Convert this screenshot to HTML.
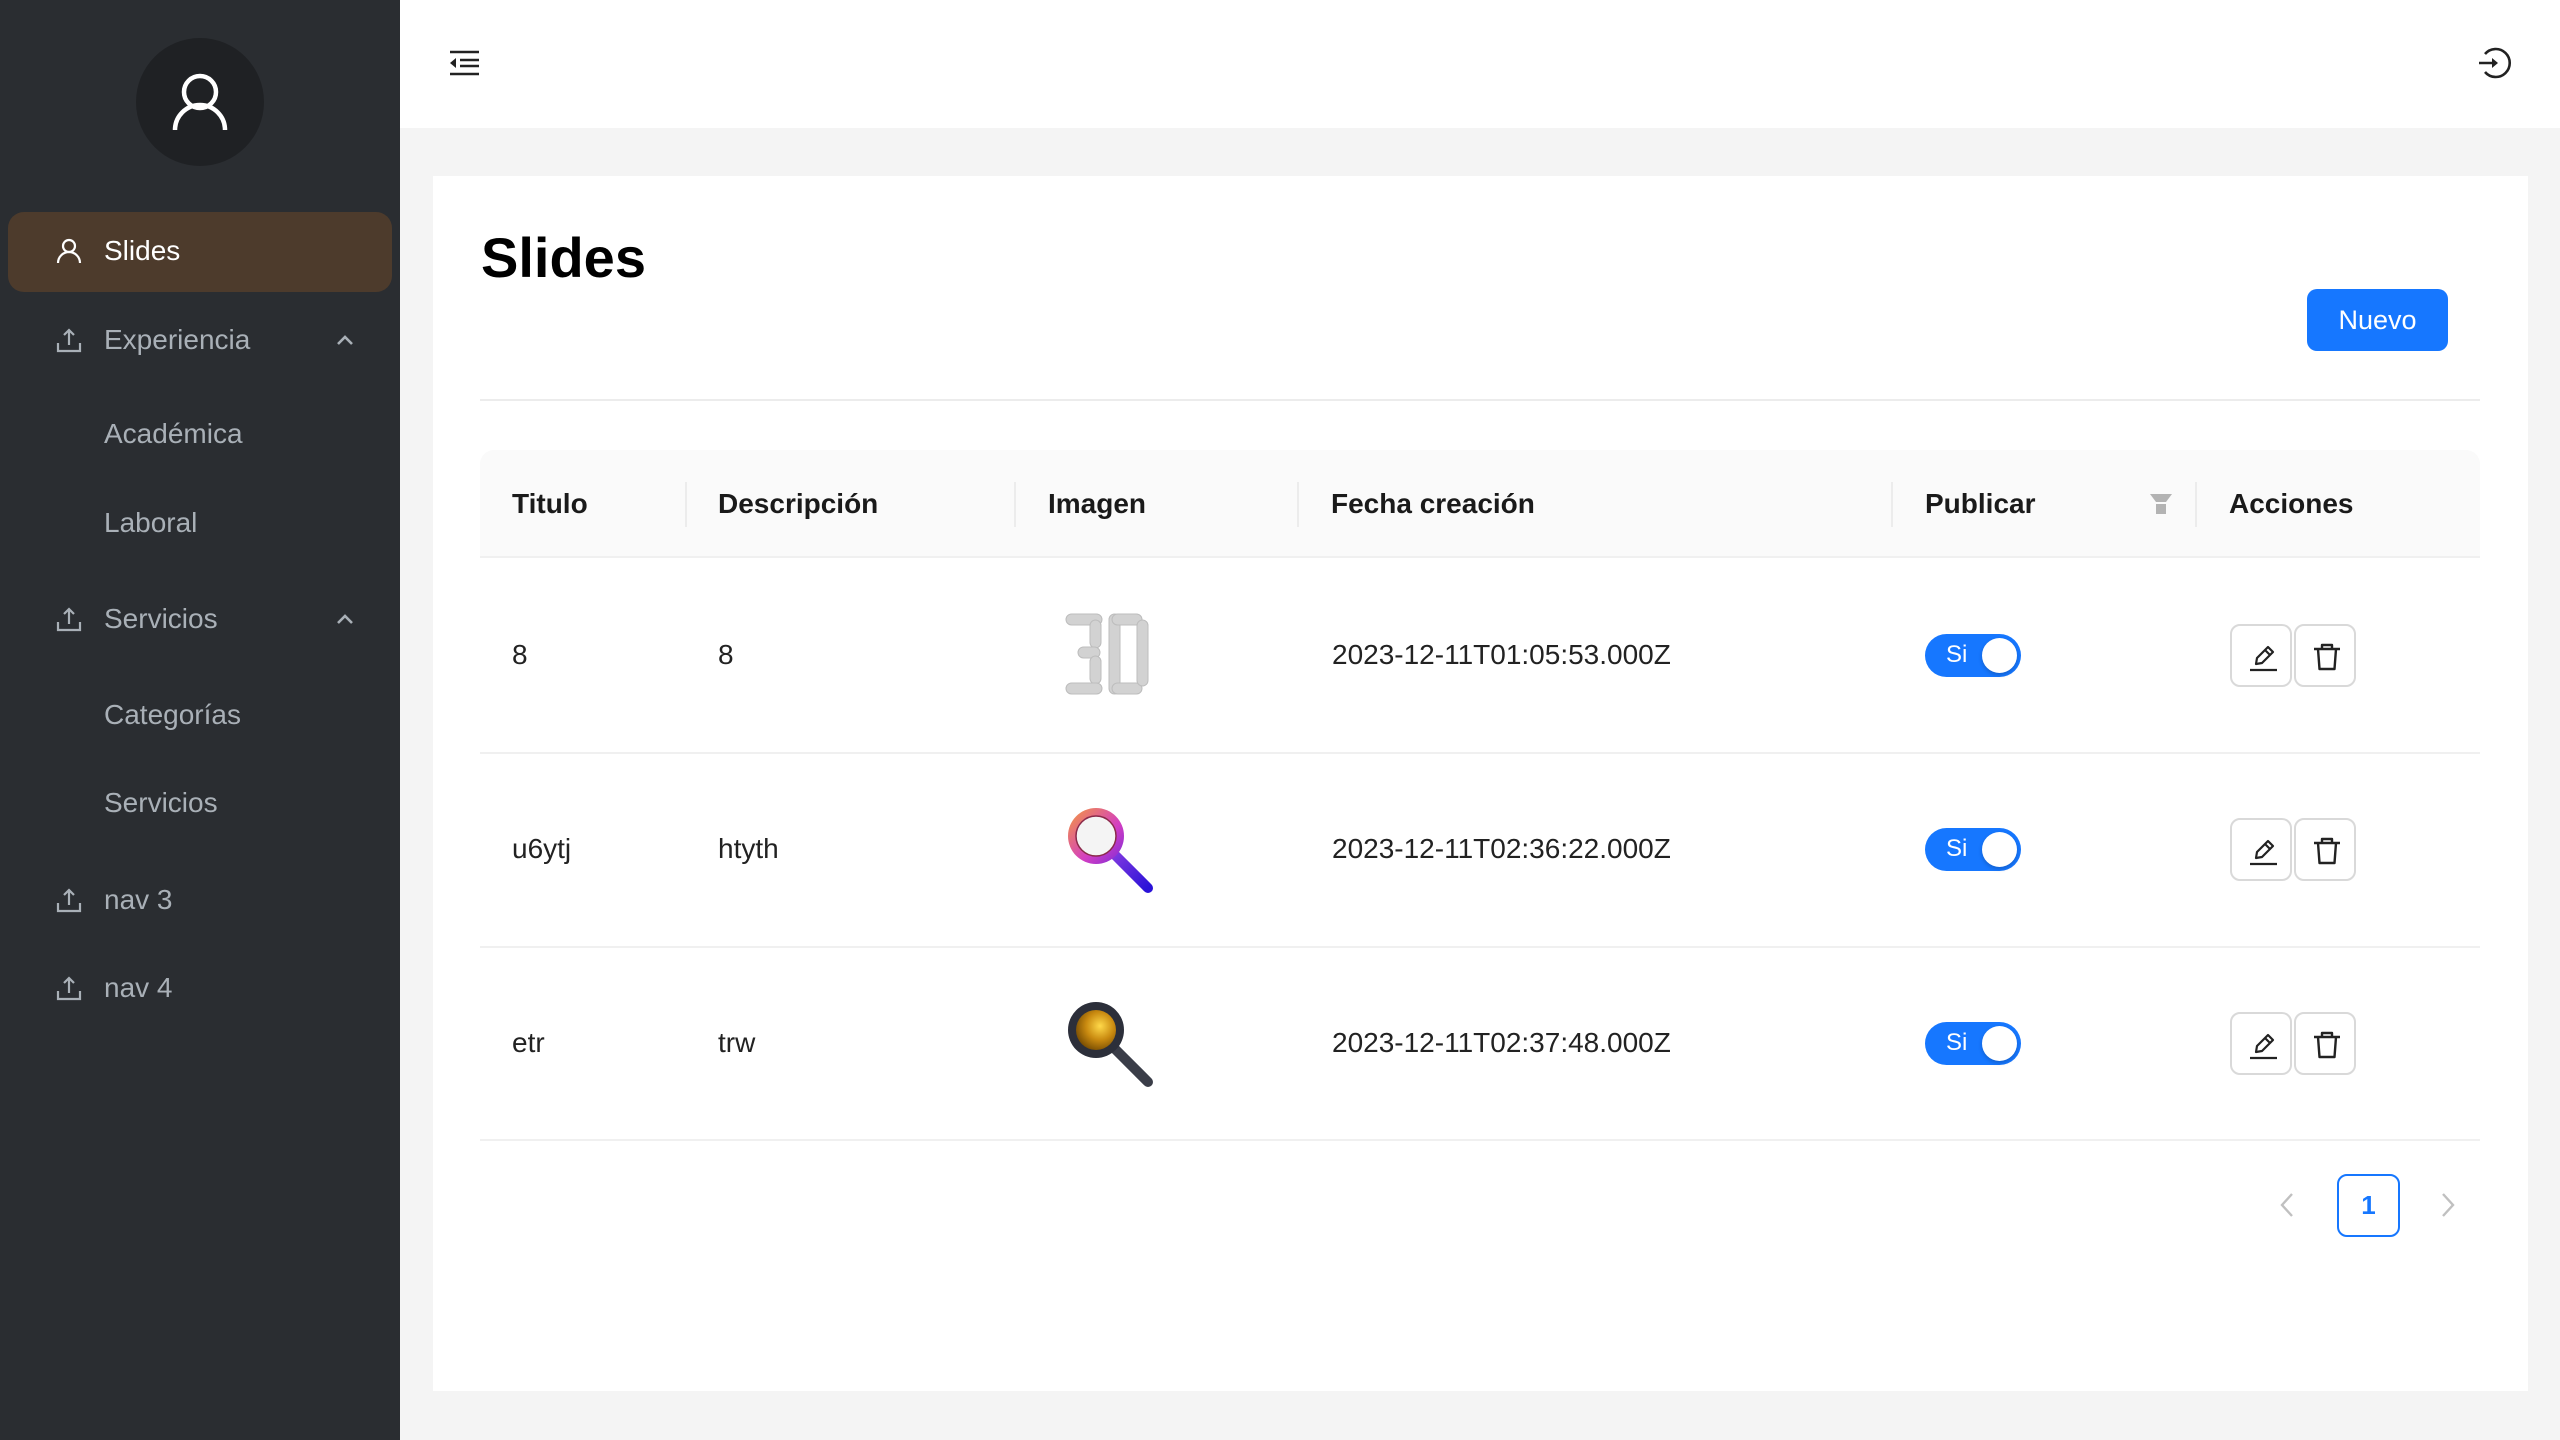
<!DOCTYPE html>
<html><head><meta charset="utf-8">
<style>
*{margin:0;padding:0;box-sizing:border-box}
body{width:2560px;height:1440px;position:relative;background:#f4f4f4;font-family:"Liberation Sans",sans-serif;overflow:hidden}
.abs{position:absolute}
#side{left:0;top:0;width:400px;height:1440px;background:#2a2d31}
.nav{position:absolute;left:104px;font-size:28px;color:#a9b0b7;line-height:32px;transform:translateY(-16px)}
.ico{position:absolute;left:56px;width:26px;height:26px;transform:translateY(-13px)}
.chev{position:absolute;left:333px;width:24px;height:24px;transform:translateY(-12px)}
#hdr{left:400px;top:0;width:2160px;height:128px;background:#fff}
#card{left:433px;top:176px;width:2095px;height:1215px;background:#fff}
.th{position:absolute;font-size:28px;font-weight:bold;color:#1a1a1a;top:504px;transform:translateY(-16px);line-height:32px}
.td{position:absolute;font-size:28px;color:#222;transform:translateY(-16px);line-height:32px}
.sep{position:absolute;top:482px;width:2px;height:45px;background:#ececec}
.rowb{position:absolute;left:480px;width:2000px;height:2px;background:#f0f0f0}
.sw{position:absolute;left:1925px;width:96px;height:43px;border-radius:22px;background:#1677ff}
.sw span{position:absolute;left:21px;top:6px;color:#fff;font-size:24px;line-height:30px}
.sw i{position:absolute;right:4px;top:4px;width:35px;height:35px;border-radius:50%;background:#fff;box-shadow:0 2px 4px rgba(0,0,0,.2)}
.btn{position:absolute;width:62px;height:63px;border:2px solid #d9d9d9;border-radius:10px;background:#fff}
.btn svg{position:absolute;left:16px;top:16px}
</style></head><body>
<div id="side" class="abs">
  <div class="abs" style="left:136px;top:38px;width:128px;height:128px;border-radius:50%;background:#1f2124"></div>
  <svg class="abs" style="left:170px;top:70px" width="60" height="64" viewBox="0 0 60 64"><circle cx="30" cy="22" r="16" fill="none" stroke="#fff" stroke-width="4.5"/><path d="M5 60 A25 25 0 0 1 55 60" fill="none" stroke="#fff" stroke-width="4.5"/></svg>
  <div class="abs" style="left:8px;top:212px;width:384px;height:80px;border-radius:16px;background:#4d3b2c"></div>
  <svg class="ico" style="top:251px" viewBox="0 0 26 26"><circle cx="13" cy="8" r="6" fill="none" stroke="#fff" stroke-width="2.2"/><path d="M2 25 A11 11 0 0 1 24 25" fill="none" stroke="#fff" stroke-width="2.2"/></svg>
  <div class="nav" style="top:251px;color:#fff">Slides</div>
  <svg class="ico" style="top:340px" viewBox="0 0 26 26"><path d="M2 16v8h22v-8M13 3v15M8 8l5-5 5 5" fill="none" stroke="#a9b0b7" stroke-width="2.2"/></svg>
  <div class="nav" style="top:340px">Experiencia</div>
  <svg class="chev" style="top:340px" viewBox="0 0 24 24"><path d="M5 16l7-7 7 7" fill="none" stroke="#a9b0b7" stroke-width="2.6"/></svg>
  <div class="nav" style="top:434px">Académica</div>
  <div class="nav" style="top:523px">Laboral</div>
  <svg class="ico" style="top:619px" viewBox="0 0 26 26"><path d="M2 16v8h22v-8M13 3v15M8 8l5-5 5 5" fill="none" stroke="#a9b0b7" stroke-width="2.2"/></svg>
  <div class="nav" style="top:619px">Servicios</div>
  <svg class="chev" style="top:619px" viewBox="0 0 24 24"><path d="M5 16l7-7 7 7" fill="none" stroke="#a9b0b7" stroke-width="2.6"/></svg>
  <div class="nav" style="top:715px">Categorías</div>
  <div class="nav" style="top:803px">Servicios</div>
  <svg class="ico" style="top:900px" viewBox="0 0 26 26"><path d="M2 16v8h22v-8M13 3v15M8 8l5-5 5 5" fill="none" stroke="#a9b0b7" stroke-width="2.2"/></svg>
  <div class="nav" style="top:900px">nav 3</div>
  <svg class="ico" style="top:988px" viewBox="0 0 26 26"><path d="M2 16v8h22v-8M13 3v15M8 8l5-5 5 5" fill="none" stroke="#a9b0b7" stroke-width="2.2"/></svg>
  <div class="nav" style="top:988px">nav 4</div>
</div>
<div id="hdr" class="abs"></div>
<svg class="abs" style="left:450px;top:50px" width="30" height="26" viewBox="0 0 30 26"><path d="M0 2h29M10 10h19M10 16h19M0 24h29" stroke="#222" stroke-width="2.4"/><path d="M0 13l6-5v10z" fill="#222"/></svg>
<svg class="abs" style="left:2477px;top:45px" width="36" height="36" viewBox="0 0 36 36"><path d="M8 9 A14 14 0 1 1 8 27" fill="none" stroke="#222" stroke-width="2.6"/><path d="M2 18h17" stroke="#222" stroke-width="2.6"/><path d="M15 13l6 5-6 5z" fill="#222"/></svg>
<div id="card" class="abs"></div>
<div class="abs" style="left:481px;top:228px;font-size:56px;font-weight:bold;color:#000;line-height:60px">Slides</div>
<div class="abs" style="left:2307px;top:289px;width:141px;height:62px;border-radius:10px;background:#1677ff;color:#fff;font-size:27px;line-height:62px;text-align:center">Nuevo</div>
<div class="abs" style="left:480px;top:399px;width:2000px;height:2px;background:#ececec"></div>
<div class="abs" style="left:480px;top:450px;width:2000px;height:108px;background:#fafafa;border-radius:14px 14px 0 0;border-bottom:2px solid #f0f0f0"></div>
<div class="th" style="left:512px">Titulo</div>
<div class="th" style="left:718px">Descripción</div>
<div class="th" style="left:1048px">Imagen</div>
<div class="th" style="left:1331px">Fecha creación</div>
<div class="th" style="left:1925px">Publicar</div>
<div class="th" style="left:2229px">Acciones</div>
<div class="sep" style="left:685px"></div><div class="sep" style="left:1014px"></div><div class="sep" style="left:1297px"></div><div class="sep" style="left:1891px"></div><div class="sep" style="left:2195px"></div>
<svg class="abs" style="left:2150px;top:494px" width="22" height="20" viewBox="0 0 22 20"><path d="M0 0h22l-6 8H6z M6 10h10v10H6z" fill="#b3b3b3"/></svg>
<div class="rowb" style="top:752px"></div><div class="rowb" style="top:946px"></div><div class="rowb" style="top:1139px"></div>
<!-- rows -->
<div class="td" style="left:512px;top:655px">8</div><div class="td" style="left:718px;top:655px">8</div>
<div class="td" style="left:1332px;top:655px">2023-12-11T01:05:53.000Z</div>
<div class="td" style="left:512px;top:849px">u6ytj</div><div class="td" style="left:718px;top:849px">htyth</div>
<div class="td" style="left:1332px;top:849px">2023-12-11T02:36:22.000Z</div>
<div class="td" style="left:512px;top:1043px">etr</div><div class="td" style="left:718px;top:1043px">trw</div>
<div class="td" style="left:1332px;top:1043px">2023-12-11T02:37:48.000Z</div>
<svg class="abs" style="left:1060px;top:610px" width="100" height="90" viewBox="0 0 100 90"><g fill="#d2d2d2" stroke="#bdbdbd" stroke-width="1"><rect x="6" y="4" width="36" height="11" rx="5.5"/><rect x="30" y="10" width="11" height="28" rx="5.5"/><rect x="18" y="37" width="22" height="11" rx="5.5"/><rect x="30" y="46" width="11" height="28" rx="5.5"/><rect x="6" y="73" width="36" height="11" rx="5.5"/><rect x="49" y="4" width="11" height="80" rx="5.5"/><rect x="52" y="4" width="30" height="11" rx="5.5"/><rect x="52" y="73" width="30" height="11" rx="5.5"/><rect x="77" y="10" width="11" height="66" rx="5.5"/></g></svg>
<svg class="abs" style="left:1060px;top:800px" width="100" height="100" viewBox="0 0 100 100"><defs><linearGradient id="g1" x1="0" y1="0" x2="1" y2="1"><stop offset="0" stop-color="#f59a3c"/><stop offset=".6" stop-color="#d33ec2"/><stop offset="1" stop-color="#7a2ad8"/></linearGradient><linearGradient id="h1" x1="0" y1="0" x2="1" y2="1"><stop offset="0" stop-color="#8a3de0"/><stop offset="1" stop-color="#2a12d8"/></linearGradient></defs><path d="M50 50L88 88" stroke="url(#h1)" stroke-width="10" stroke-linecap="round"/><circle cx="36" cy="36" r="28" fill="url(#g1)"/><circle cx="36" cy="36" r="20" fill="#f4f4f4" stroke="#8a2a4a" stroke-width="1.5"/></svg>
<svg class="abs" style="left:1060px;top:994px" width="100" height="100" viewBox="0 0 100 100"><defs><radialGradient id="g2" cx=".6" cy=".4" r=".7"><stop offset="0" stop-color="#ffd94a"/><stop offset=".5" stop-color="#c98a10"/><stop offset="1" stop-color="#6a4200"/></radialGradient></defs><path d="M50 50L88 88" stroke="#3a3d48" stroke-width="10" stroke-linecap="round"/><circle cx="36" cy="36" r="28" fill="#2c2f3a"/><circle cx="36" cy="36" r="20" fill="url(#g2)"/></svg>
<div class="sw" style="top:634px"><span>Si</span><i></i></div>
<div class="sw" style="top:828px"><span>Si</span><i></i></div>
<div class="sw" style="top:1022px"><span>Si</span><i></i></div>
<!-- action buttons -->
<div class="btn" style="left:2230px;top:624px"><svg width="30" height="30" viewBox="0 0 30 30"><path d="M8 22l1-6L20 5l5 5-11 11z M17 8l5 5" fill="none" stroke="#222" stroke-width="2.2" stroke-linejoin="round"/><path d="M2 28h27" stroke="#222" stroke-width="2.2"/></svg></div>
<div class="btn" style="left:2294px;top:624px"><svg width="30" height="30" viewBox="0 0 30 30"><path d="M2 7h26M10 7V3h10v4M6 7l1.5 20h15L24 7" fill="none" stroke="#222" stroke-width="2.4" stroke-linejoin="round"/></svg></div>
<div class="btn" style="left:2230px;top:818px"><svg width="30" height="30" viewBox="0 0 30 30"><path d="M8 22l1-6L20 5l5 5-11 11z M17 8l5 5" fill="none" stroke="#222" stroke-width="2.2" stroke-linejoin="round"/><path d="M2 28h27" stroke="#222" stroke-width="2.2"/></svg></div>
<div class="btn" style="left:2294px;top:818px"><svg width="30" height="30" viewBox="0 0 30 30"><path d="M2 7h26M10 7V3h10v4M6 7l1.5 20h15L24 7" fill="none" stroke="#222" stroke-width="2.4" stroke-linejoin="round"/></svg></div>
<div class="btn" style="left:2230px;top:1012px"><svg width="30" height="30" viewBox="0 0 30 30"><path d="M8 22l1-6L20 5l5 5-11 11z M17 8l5 5" fill="none" stroke="#222" stroke-width="2.2" stroke-linejoin="round"/><path d="M2 28h27" stroke="#222" stroke-width="2.2"/></svg></div>
<div class="btn" style="left:2294px;top:1012px"><svg width="30" height="30" viewBox="0 0 30 30"><path d="M2 7h26M10 7V3h10v4M6 7l1.5 20h15L24 7" fill="none" stroke="#222" stroke-width="2.4" stroke-linejoin="round"/></svg></div>
<!-- pagination -->
<svg class="abs" style="left:2279px;top:1192px" width="16" height="26" viewBox="0 0 16 26"><path d="M13 2L3 13l10 11" fill="none" stroke="#c0c0c0" stroke-width="2.4"/></svg>
<div class="abs" style="left:2337px;top:1174px;width:63px;height:63px;border:2.5px solid #1677ff;border-radius:10px;color:#1677ff;font-size:26px;font-weight:bold;text-align:center;line-height:58px">1</div>
<svg class="abs" style="left:2440px;top:1192px" width="16" height="26" viewBox="0 0 16 26"><path d="M3 2l10 11L3 24" fill="none" stroke="#c0c0c0" stroke-width="2.4"/></svg>
</body></html>
